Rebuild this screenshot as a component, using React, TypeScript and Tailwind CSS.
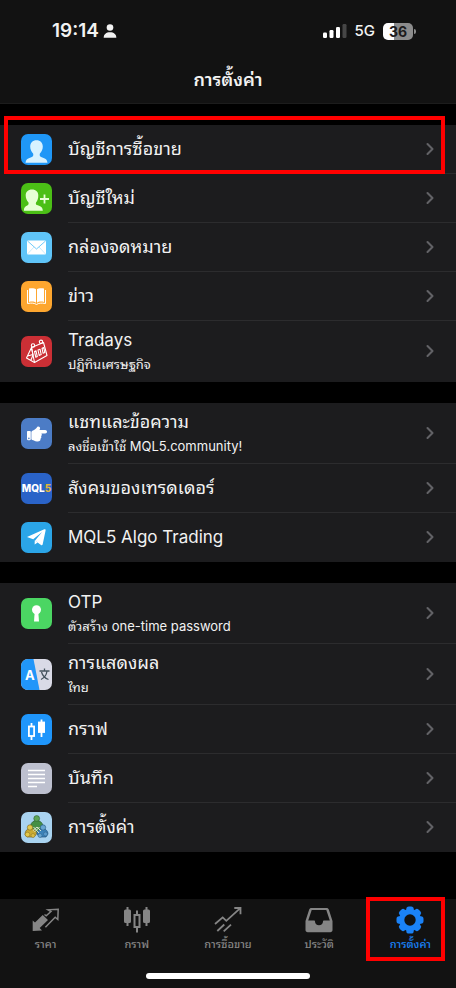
import type { ReactNode } from "react";
import clsx from "clsx";
import { ChevronRight } from "lucide-react";
import { FaHandPointRight } from "react-icons/fa";

type Item = { title: string; subtitle?: string; icon: ReactNode; marked?: boolean; latin?: boolean };

const tile = "h-[31px] w-[31px] shrink-0 rounded-[7px]";

function AccountIcon() {
  return (
    <svg viewBox="0 0 31 31" className={clsx(tile, "bg-[#1f97f7]")}>
      <path
        d="M15.5 6.300c-3.900 0-6.300 2.600-6.300 6.200 0 2.700 1.100 5.300 2.900 6.900.5 1.700.1 2.900-1.300 3.500l-3.500 1.500c-1.400.6-2.300 1.600-2.800 4.300h22c-.5-2.700-1.400-3.700-2.800-4.300l-3.500-1.500c-1.400-.6-1.800-1.800-1.300-3.500 1.800-1.600 2.900-4.200 2.900-6.900 0-3.600-2.400-6.200-6.300-6.200z"
        fill="#d7f2ff"
      />
    </svg>
  );
}

function NewAccountIcon() {
  return (
    <svg viewBox="0 0 31 31" className={clsx(tile, "bg-[#4bbf16]")}>
      <path
        d="M11 6.500c-4 0-6.300 2.500-6.300 6 0 2.900 1.100 5.100 2.700 6.700.5 1.700.1 2.700-1.200 3.300-2 .9-3.200 1.800-3.400 5.300h19c-.2-3.500-1.700-4.400-5.800-5.700-1.200-.5-1.400-1.500-.9-2.900 1.500-1.600 2.200-3.800 2.200-6.700 0-3.500-2.300-6-6.300-6z"
        fill="#e6ffd5"
      />
      <path d="M23.500 11.500v9M19 16h9" stroke="#e6ffd5" strokeWidth="1.800" />
    </svg>
  );
}

function MailIcon() {
  return (
    <svg viewBox="0 0 31 31" className={clsx(tile, "bg-[#5fc4f8]")}>
      <rect x="6" y="8.500" width="19" height="14" rx="1" fill="#fff" />
      <path d="M6.500 9l9 8 9-8" fill="none" stroke="#5fc4f8" strokeWidth=".9" />
      <path d="M6.500 22l6.500-7M24.500 22L18 15" fill="none" stroke="#a5ddfa" strokeWidth=".6" />
    </svg>
  );
}

function NewsIcon() {
  return (
    <svg viewBox="0 0 31 31" className={clsx(tile, "bg-[#fda62f]")}>
      <path d="M8 7.500c3-.6 5.500-.4 7 .8v13.400c-1.500-1.200-4-1.400-7-.8zM23 7.500c-3-.6-5.500-.4-7 .8v13.400c1.500-1.200 4-1.400 7-.8z" fill="#fff" />
      <path d="M6.500 9v13.500c4-.7 7-.5 9 1 2-1.500 5-1.700 9-1V9" fill="none" stroke="#fff" strokeWidth="1" />
    </svg>
  );
}

function TradaysIcon() {
  return (
    <svg viewBox="0 0 31 31" className={clsx(tile, "bg-[#cb2f35]")} fill="none" stroke="#fff" strokeWidth="1.100" strokeLinejoin="round" strokeLinecap="round">
      <path d="M10.500 11.500L22.500 6.500l3.500 13L13.500 26.500z" />
      <path d="M10.500 11.500L5.500 22l8 4.500M6.500 20l5.500-1.500M10.500 11.500L12 19l-2 5" />
      <circle cx="12" cy="9.500" r="1.700" />
      <circle cx="20" cy="5.800" r="1.700" />
      <path d="M13.500 15.500l1.500-.7 1.300 5.800-1.500.6zM17 14l2-.8 1.200 5.300-2 .9zM21 12.200l1.700-.7 1.100 5-1.700.8z" />
    </svg>
  );
}

function ChatIcon() {
  return (
    <span className={clsx(tile, "flex items-center justify-center bg-[#4c7cc6]")}>
      <FaHandPointRight className="h-5 w-5 text-white" />
    </span>
  );
}

function MqlIcon() {
  return (
    <svg viewBox="0 0 31 31" className={clsx(tile, "bg-[#2a63c8]")}>
      <text x="15.500" y="18.500" textAnchor="middle" fontFamily="Inter, sans-serif" fontSize="10" fontWeight="800" fill="#fff">
        MQL<tspan fill="#e0b53c">5</tspan>
      </text>
    </svg>
  );
}

function TelegramIcon() {
  return (
    <svg viewBox="0 0 31 31" className={clsx(tile, "bg-[#2ba5e7]")}>
      <path d="M6 15.100L23.300 7.300c.9-.3 1.500.2 1.300 1.200l-2.900 13.700c-.2 1-.9 1.200-1.700.7l-7.800-5.600z" fill="#fff" />
      <path d="M12.200 17.300l8.900-7.400-7 8.500-.5 4z" fill="#2ba5e7" />
      <path d="M13.600 22.400l.2-4.100 2.900 2.100z" fill="#fff" />
    </svg>
  );
}

function OtpIcon() {
  return (
    <svg viewBox="0 0 31 31" className={clsx(tile, "bg-[#4bd663]")} fill="#fff">
      <circle cx="15.500" cy="11.800" r="4.500" />
      <path d="M13.700 14h3.600l.7 9.500h-5z" />
    </svg>
  );
}

function LanguageIcon() {
  return (
    <svg viewBox="0 0 31 31" className={clsx(tile, "bg-[#d9dae6]")}>
      <path d="M0 0h12.500l6 31H0z" fill="#2196f9" />
      <text x="4" y="21" fontFamily="Inter, sans-serif" fontSize="13" fontWeight="700" fill="#fff">
        A
      </text>
      <path d="M18.500 12h10M23.500 9.500V12M20 20.500c3.500-1.700 5.500-4.500 6-8.500M20.500 13c1 3.500 3.500 6.200 7 7.500" fill="none" stroke="#46545f" strokeWidth="1.300" />
    </svg>
  );
}

function ChartIcon() {
  return (
    <svg viewBox="0 0 31 31" className={clsx(tile, "bg-[#1f96fb]")} fill="none" stroke="#fff" strokeWidth="1.800">
      <path d="M10.500 9v3.500M10.500 22v4" />
      <rect x="7.900" y="12.500" width="5.200" height="9.500" />
      <path d="M20.500 5.500v17.500" />
      <rect x="17.900" y="8.500" width="5.200" height="9.500" fill="#fff" />
    </svg>
  );
}

function JournalIcon() {
  return (
    <svg viewBox="0 0 31 31" className={clsx(tile, "bg-[#bdc0cf]")}>
      <path d="M7 7.500h17M7 11.500h17M7 15.500h17M7 19.500h17M7 23.500h9" stroke="#fff" strokeWidth="1.400" />
    </svg>
  );
}

function MetaTraderIcon() {
  return (
    <svg viewBox="0 0 31 31" className={clsx(tile, "bg-[#a9d3f0]")}>
      <path d="M9.500 14c.5-3.500 3-5.500 6.200-5.500s5.800 2 6.300 5.500l1 6H9z" fill="#458f45" stroke="#2f6234" strokeWidth=".7" />
      <circle cx="15.700" cy="6.500" r="2.900" fill="#5da657" stroke="#2f6234" strokeWidth=".6" />
      <path d="M4 23c0-4 2-6.500 5.500-6.500S15.500 19 15.500 22L13 25H6z" fill="#c9aa32" stroke="#79651e" strokeWidth=".7" />
      <circle cx="9" cy="15.500" r="2.700" fill="#e3c94d" stroke="#79651e" strokeWidth=".6" />
      <path d="M16 22c0-3 2.500-5.500 5.500-5.500S27 19 27 22l-2 3h-6.500z" fill="#3b82b9" stroke="#23557e" strokeWidth=".7" />
      <circle cx="22" cy="15.500" r="2.700" fill="#68a6d1" stroke="#23557e" strokeWidth=".6" />
      <path d="M12 18.500l4-3.500 4 4M12.500 15l5.500 6M13.500 20l5-5" fill="none" stroke="#dbe5cf" strokeWidth="1" />
      <circle cx="6.500" cy="22.500" r="2.300" fill="#e3c94d" stroke="#79651e" strokeWidth=".4" />
      <circle cx="12" cy="23.500" r="2" fill="#d9bd44" stroke="#79651e" strokeWidth=".4" />
      <circle cx="19" cy="23.500" r="2" fill="#68a6d1" stroke="#23557e" strokeWidth=".4" />
      <circle cx="24.500" cy="22" r="2" fill="#5a9acb" stroke="#23557e" strokeWidth=".4" />
    </svg>
  );
}

const sections: Item[][] = [
  [
    { title: "บัญชีการซื้อขาย", icon: <AccountIcon />, marked: true },
    { title: "บัญชีใหม่", icon: <NewAccountIcon /> },
    { title: "กล่องจดหมาย", icon: <MailIcon /> },
    { title: "ข่าว", icon: <NewsIcon /> },
    { title: "Tradays", subtitle: "ปฏิทินเศรษฐกิจ", icon: <TradaysIcon />, latin: true },
  ],
  [
    { title: "แชทและข้อความ", subtitle: "ลงชื่อเข้าใช้ MQL5.community!", icon: <ChatIcon /> },
    { title: "สังคมของเทรดเดอร์", icon: <MqlIcon /> },
    { title: "MQL5 Algo Trading", icon: <TelegramIcon />, latin: true },
  ],
  [
    { title: "OTP", subtitle: "ตัวสร้าง one-time password", icon: <OtpIcon />, latin: true },
    { title: "การแสดงผล", subtitle: "ไทย", icon: <LanguageIcon /> },
    { title: "กราฟ", icon: <ChartIcon /> },
    { title: "บันทึก", icon: <JournalIcon /> },
    { title: "การตั้งค่า", icon: <MetaTraderIcon /> },
  ],
];

const tabs: { label: string; icon: ReactNode; active?: boolean }[] = [
  {
    label: "ราคา",
    icon: (
      <svg viewBox="0 0 28 28" className="h-7 w-7">
        <path d="M.7 25V14.500l2.300 2L10.700 9l5.300 5-8.300 8 2.300 2.500z" fill="currentColor" />
        <path d="M12.500 8.500l1.700 1.300L19 5.500l-3-1.700 10.200-.6-.4 10.300-2.600-2.200L13.400 21.300" fill="none" stroke="currentColor" strokeWidth="1.500" />
      </svg>
    ),
  },
  {
    label: "กราฟ",
    icon: (
      <svg viewBox="0 0 28 28" className="h-7 w-7" fill="currentColor" stroke="currentColor" strokeWidth="2">
        <path d="M4.500 1v19M23.500 1v19M14 4.500V9M14 21v5.500" />
        <rect x="2" y="4.500" width="5" height="11.500" rx=".5" />
        <rect x="21" y="4.500" width="5" height="11.500" rx=".5" />
        <rect x="11.500" y="9" width="5" height="12" fill="none" />
      </svg>
    ),
  },
  {
    label: "การซื้อขาย",
    icon: (
      <svg viewBox="0 0 28 28" className="h-7 w-7" fill="none" stroke="currentColor" strokeWidth="1.800">
        <path d="M1 18l7.700-6.600 3.600 3.400L26.300 2.200M20.300 2h6.200v6.200M3.300 25l7-6.500M9.700 25.300l7.300-6.600" />
      </svg>
    ),
  },
  {
    label: "ประวัติ",
    icon: (
      <svg viewBox="0 0 28 28" className="h-7 w-7">
        <path
          d="M6.500 2h15c1.200 0 2 .6 2.400 1.700L27.500 15v9c0 1.300-.9 2.200-2.200 2.200H2.700C1.400 26.200.5 25.300.5 24V15L4.100 3.700C4.500 2.600 5.300 2 6.500 2zM6.700 4L3.200 14.500H9c.6 0 1 .4 1 1 0 2.200 1.700 3.700 4 3.700s4-1.500 4-3.700c0-.6.4-1 1-1h5.800L21.300 4z"
          fill="currentColor"
          fillRule="evenodd"
        />
      </svg>
    ),
  },
  {
    label: "การตั้งค่า",
    active: true,
    icon: (
      <svg viewBox="0 0 28 28" className="h-7 w-7">
        <g fill="currentColor">
          <circle cx="14" cy="14" r="11" />
          {[0, 45, 90, 135, 180, 225, 270, 315].map((angle) => (
            <rect key={angle} x="10.300" y=".5" width="7.400" height="8" rx="2.600" transform={`rotate(${angle} 14 14)`} />
          ))}
        </g>
        <circle cx="14" cy="14" r="5.700" fill="#121212" />
      </svg>
    ),
  },
];

function StatusBar() {
  return (
    <div className="flex h-[62px] items-center justify-between pr-[40px] pl-[52px]">
      <div className="flex items-center gap-1 text-[19px] font-semibold">
        19:14
        <svg viewBox="0 0 14 16" className="h-4 w-[14px]" fill="currentColor">
          <circle cx="7" cy="4.500" r="3.300" />
          <path d="M.7 14.800c0-3.800 2.500-5.600 6.300-5.600s6.300 1.800 6.300 5.600z" />
        </svg>
      </div>
      <div className="flex items-center">
        <svg viewBox="0 0 24 16" className="h-4 w-6" fill="#fff">
          <rect x="0" y="9.500" width="4" height="5.500" rx="1.200" />
          <rect x="6.500" y="7" width="4" height="8" rx="1.200" />
          <rect x="13" y="4" width="4" height="11" rx="1.200" />
          <rect x="19.500" y="1" width="4" height="14" rx="1.200" fill="#464646" />
        </svg>
        <span className="ml-2 text-[15px] font-medium">5G</span>
        <span className="ml-2 flex h-[17px] w-[30px] items-center justify-center rounded-[5px] bg-linear-to-r from-white from-36% to-[#8c8c8c] to-36% text-[14px] font-bold text-[#1c1c1c]">
          36
        </span>
        <span className="ml-px h-[5px] w-[2px] rounded-r bg-[#8c8c8c]" />
      </div>
    </div>
  );
}

function Row({ item }: { item: Item }) {
  return (
    <li className="group relative">
      <button type="button" className="flex w-full items-center gap-4 pl-[21px] text-left">
        {item.icon}
        <span
          className={clsx(
            "flex min-w-0 flex-1 items-center justify-between border-b border-[#2c2c2e] pr-4 group-last:border-transparent",
            item.subtitle ? "h-[61px]" : "h-[49px]",
          )}
        >
          <span className="flex flex-col">
            <span className={clsx("leading-6", item.latin ? "text-[17px]" : "text-[18px]")}>{item.title}</span>
            {item.subtitle && <span className="mt-[2px] text-[13px] leading-5">{item.subtitle}</span>}
          </span>
          <ChevronRight className="h-5 w-5 text-[#626266]" strokeWidth={2.5} />
        </span>
      </button>
      {item.marked && <span className="pointer-events-none absolute -top-[9px] right-[11px] bottom-0 left-1 z-10 border-4 border-[#ff0000]" />}
    </li>
  );
}

export default function App() {
  return (
    <div className="flex min-h-screen flex-col bg-black font-[Inter,'Noto_Sans_Thai_Looped','Noto_Looped_Thai',Loma,Garuda,Waree,sans-serif] text-[#f2f2f2]">
      <header className="border-b border-[#1c1c1c] bg-[#121212]">
        <StatusBar />
        <h1 className="flex h-[41px] items-start justify-center pt-1 text-[18px] leading-7 font-semibold">การตั้งค่า</h1>
      </header>

      <main className="flex flex-1 flex-col gap-[21px] py-[21px]">
        {sections.map((items, i) => (
          <ul key={i} className="bg-[#1c1c1e]">
            {items.map((item) => (
              <Row key={item.title} item={item} />
            ))}
          </ul>
        ))}
      </main>

      <nav className="bg-[#121212]">
        <div className="grid grid-cols-5">
          {tabs.map((tab) => (
            <button
              key={tab.label}
              type="button"
              className={clsx("relative flex h-[62px] flex-col items-center pt-[7px]", tab.active ? "text-[#1a82f7]" : "text-[#858585]")}
            >
              {tab.icon}
              <span className="mt-[2px] text-[11px] leading-4 font-medium">{tab.label}</span>
              {tab.active && <span className="pointer-events-none absolute -top-[2px] right-[11px] bottom-0 left-px border-4 border-[#ff0000]" />}
            </button>
          ))}
        </div>
        <div className="flex h-[27px] items-start justify-center pt-3">
          <span className="h-[6px] w-[36%] rounded-full bg-white" />
        </div>
      </nav>
    </div>
  );
}
